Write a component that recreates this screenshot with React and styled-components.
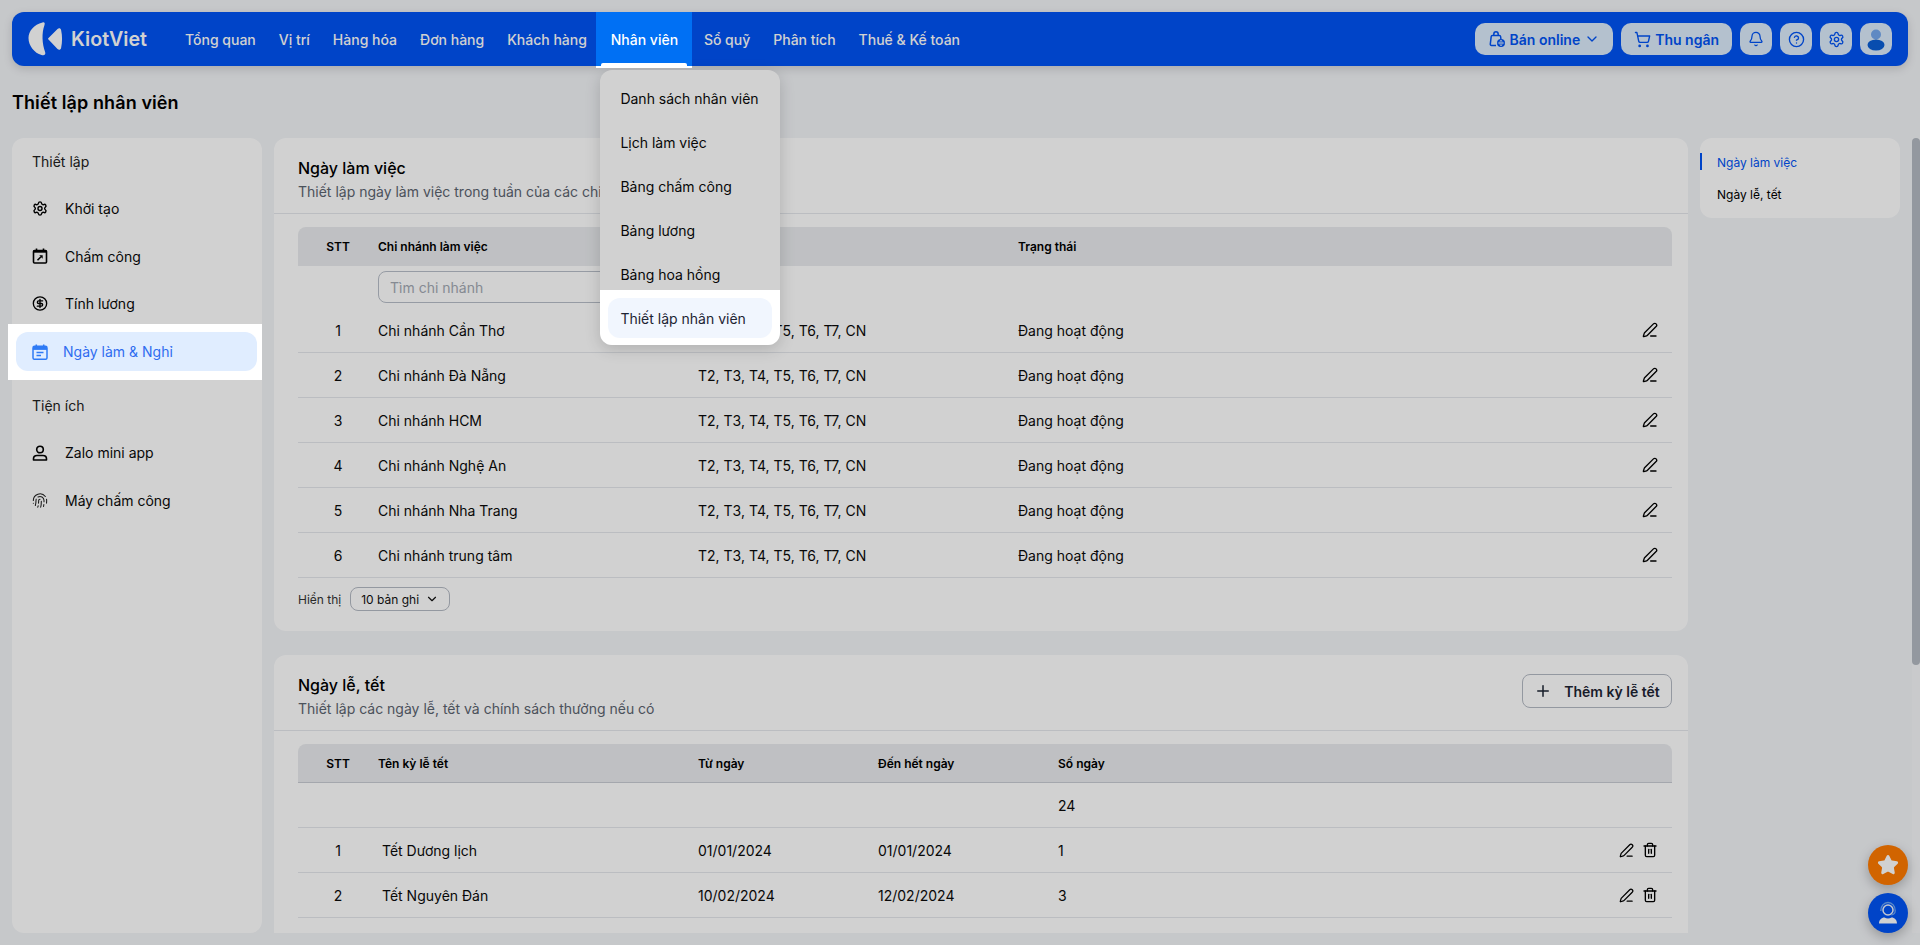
import React from 'react'
import styled, { createGlobalStyle } from 'styled-components'
import {
  Bell, ChevronDown, CircleDollarSign, CircleHelp, Fingerprint, PenLine,
  Plus, Settings, ShoppingCart, Star, Trash2
} from 'lucide-react'

const GlobalStyle = createGlobalStyle`
  html, body {
    margin: 0;
    height: 100%;
    overflow: hidden;
    background: #f2f4f7;
    color: #0a0a0a;
    font-family: Inter, "Noto Sans", sans-serif;
    font-size: 14px;
  }
  * { box-sizing: border-box; }
`;

const Page = styled.div`
  height: 100vh;
  display: flex;
  flex-direction: column;
`;

const Dim = styled.div`
  position: fixed;
  inset: 0;
  z-index: 1000;
  background: rgba(0, 0, 0, 0.18);
`;

const Header = styled.header`
  margin: 12px 12px 0;
  height: 54px;
  flex: none;
  display: flex;
  align-items: center;
  padding: 0 16px;
  border-radius: 12px;
  background: #0053f4;
  box-shadow: 0 3px 10px rgba(0, 0, 0, 0.14);
`;

const LogoWrap = styled.div`
  display: flex;
  align-items: center;
  width: 145.5px;
  flex: none;
  color: #fff;
`;

const LogoText = styled.span`
  margin-left: 8px;
  font-size: 19.7px;
  font-weight: 600;
`;

const Nav = styled.nav`
  display: flex;
  height: 100%;
  flex: 1;
`;

const NavSlot = styled.div`
  position: relative;
  display: flex;
  margin-left: -2px;
`;

const NavLink = styled.a`
  display: flex;
  align-items: center;
  padding: 0 11.500px;
  color: #fff;
  font-weight: 500;
  white-space: nowrap;
`;

const ActiveNavLink = styled(NavLink)`
  position: relative;
  z-index: 1001;
  width: 96px;
  justify-content: center;
  background: #0070f4;
  height: 56px;
  padding: 0 0 2px;
  box-shadow: inset 0 -2px 0 #fff;

  &::after {
    content: "";
    position: absolute;
    left: 5px;
    right: 5px;
    bottom: 2px;
    height: 3px;
    border-radius: 2px 2px 0 0;
    background: #fff;
  }
`;

const Dropdown = styled.div`
  position: absolute;
  top: 58px;
  left: 4px;
  width: 180px;
  padding-top: 6px;
  border-radius: 12px;
  background: #fff;
  box-shadow: 0 4px 16px rgba(0, 0, 0, 0.16);
`;

const DropItem = styled.div`
  height: 44px;
  display: flex;
  align-items: center;
  padding: 0 20px;
  white-space: nowrap;
`;

const DropHighlight = styled.div`
  position: relative;
  z-index: 1001;
  height: 55px;
  margin-top: -6px;
  padding: 8px 8px 7px;
  background: #fff;
  border-radius: 0 0 12px 12px;
`;

const DropActive = styled.div`
  height: 40px;
  display: flex;
  align-items: center;
  padding: 0 12px;
  border-radius: 12px;
  background: #f1f6fe;
  color: #1d2433;
  white-space: nowrap;
`;

const Tools = styled.div`
  display: flex;
  gap: 8px;
`;

const ToolButton = styled.button`
  height: 32px;
  min-width: 32px;
  padding: ${p => (p.$wide ? '0 13px' : '0')};
  display: flex;
  align-items: center;
  justify-content: center;
  gap: 4px;
  border: 0;
  border-radius: 10px;
  background: #dcecfc;
  color: #0053f4;
  font-family: inherit;
  font-size: 14px;
  font-weight: 600;
`;

const PageTitle = styled.h1`
  flex: none;
  height: 72px;
  margin: 0;
  padding-left: 12px;
  display: flex;
  align-items: center;
  font-size: 18px;
  font-weight: 600;
  letter-spacing: 0.1px;
  color: #000;
`;

const Scroller = styled.div`
  flex: 1;
  min-height: 0;
  margin-bottom: 12px;
  padding: 0 20px 0 12px;
  overflow: hidden;
  display: grid;
  grid-template-columns: 250px 1fr 200px;
  gap: 12px;
  align-items: start;
`;

const ScrollTrack = styled.div`
  position: fixed;
  top: 138px;
  right: 0;
  bottom: 12px;
  width: 8px;
  background: #f6f7f9;
`;

const ScrollThumb = styled.div`
  height: 527px;
  border-radius: 4px;
  background: #b4bac2;
`;

const Sidebar = styled.aside`
  height: 795px;
  padding-top: 3px;
  border-radius: 12px;
  background: #fff;
`;

const SideLabel = styled.div`
  height: 40px;
  margin-bottom: 4px;
  display: flex;
  align-items: center;
  padding-left: 20px;
  color: #222;
`;

const SideItem = styled.div`
  height: 47.500px;
  display: flex;
  align-items: center;
  gap: 17px;
  padding-left: 20px;
  white-space: nowrap;
`;

const SideIcon = styled.span`
  width: 16px;
  display: flex;
  justify-content: center;
  flex: none;
`;

const SideHighlight = styled.div`
  position: relative;
  z-index: 1001;
  height: 56px;
  margin: -3.500px 0 5px -4px;
  padding: 8px 5px 9px 8px;
  background: #fff;
`;

const SideActive = styled.div`
  height: 39px;
  display: flex;
  align-items: center;
  gap: 15px;
  padding-left: 16px;
  border-radius: 12px;
  background: #e0edff;
  color: #2f6cf0;
`;

const Column = styled.main`
  display: flex;
  flex-direction: column;
  gap: 24px;
`;

const Card = styled.section`
  border-radius: 12px;
  background: #fff;
  padding-bottom: ${p => p.$bottom}px;
`;

const CardHead = styled.div`
  height: 76px;
  padding: 18px 22px 0 24px;
  display: flex;
  justify-content: space-between;
  border-bottom: 1px solid #e4e7ec;
`;

const CardTitle = styled.div`
  font-size: 16px;
  font-weight: 500;
  line-height: 24px;
  color: #000;
`;

const CardSub = styled.div`
  line-height: 24px;
  color: #5c6470;
`;

const OutlineButton = styled.button`
  width: 150px;
  height: 34px;
  margin-top: 1px;
  margin-right: -6px;
  display: flex;
  align-items: center;
  justify-content: center;
  gap: 12px;
  border: 1px solid #b4bac4;
  border-radius: 8px;
  background: #fff;
  font-family: inherit;
  font-size: 14px;
  font-weight: 600;
  color: #1d2433;
`;

const Table = styled.div`
  margin: 13px 16px 0 24px;
`;

const Row = styled.div`
  display: grid;
  grid-template-columns: ${p => p.$cols};
  align-items: center;
  height: 45px;
  border-bottom: 1px solid #e4e7ec;
`;

const HeadRow = styled(Row)`
  height: 39px;
  border-radius: 8px 8px 0 0;
  background: #e9ebee;
  border-bottom: ${p => (p.$line ? '1px solid #c8ccd4' : '0')};
  font-size: 12px;
  font-weight: 600;
  color: #000;
`;

const FilterRow = styled(Row)`
  height: 42px;
  border-bottom: 0;
`;

const Center = styled.div`
  text-align: center;
`;

const Indented = styled.div`
  padding-left: 4px;
`;

const SearchBox = styled.input`
  width: 300px;
  height: 32px;
  padding: 0 11px;
  border: 1px solid #b8bec8;
  border-radius: 8px;
  background: #fff;
  font-family: inherit;
  font-size: 14px;

  &::placeholder { color: #a3a9b3; }
`;

const Actions = styled.div`
  display: flex;
  justify-content: flex-end;
  align-items: center;
  gap: 8px;
  padding-right: 14px;
`;

const Footer = styled.div`
  display: flex;
  align-items: center;
  gap: 9px;
  margin: 9px 24px 0;
  font-size: 12px;
  color: #333;
`;

const PageSize = styled.div`
  width: 100px;
  height: 24px;
  display: flex;
  align-items: center;
  justify-content: space-between;
  padding: 0 10px;
  border: 1px solid #b4bac4;
  border-radius: 8px;
  color: #111;
`;

const Outline = styled.aside`
  height: 80px;
  padding-top: 8px;
  border-radius: 12px;
  background: #fff;
  font-size: 12px;
`;

const OutlineItem = styled.div`
  position: relative;
  height: 32px;
  display: flex;
  align-items: center;
  padding-left: 17px;
  color: ${p => (p.$active ? '#0053f4' : '#000')};

  &::before {
    content: "";
    display: ${p => (p.$active ? 'block' : 'none')};
    position: absolute;
    left: 0;
    top: 7px;
    width: 2px;
    height: 17px;
    background: #0053f4;
  }
`;

const Floating = styled.div`
  position: fixed;
  right: 12px;
  bottom: 12px;
  display: flex;
  flex-direction: column;
  gap: 8px;
`;

const Fab = styled.div`
  width: 40px;
  height: 40px;
  display: flex;
  align-items: center;
  justify-content: center;
  border-radius: 50%;
  background: ${p => p.$bg};
  box-shadow: 0 4px 12px rgba(0, 0, 0, 0.25);
`;

const Logo = () => (
  <svg width="35" height="34" viewBox="0 0 35 34" fill="currentColor">
    <path d="M14.500 0.500C6 2.500 0.500 9 0.500 16c0 8 6 15 13 17 3 0.800 4.500-0.500 3.600-3-3-8-3.600-19-0.600-27 0.800-2.200-0.300-3-2-2.500z" />
    <path d="M20.500 16l9-9c1.500-1.400 3.200-0.800 3.600 1 1.300 6 1.300 12 0 18-0.400 1.800-2.100 2.400-3.600 1l-9-9.500c-0.600-0.500-0.600-1 0-1.500z" />
  </svg>
);

const BagGlobe = () => (
  <svg width="18" height="18" viewBox="0 0 18 18" fill="none" stroke="currentColor" strokeWidth="1.500">
    <path d="M8 15.500H3.500c-.8 0-1.300-.6-1.200-1.400L3.200 6.500c.1-.6.500-1 1.100-1h7.200c.6 0 1 .4 1.100 1l.3 2.500" strokeLinejoin="round" />
    <path d="M5.800 5.500V4.200C5.800 2.700 6.700 1.700 8 1.700s2.200 1 2.200 2.500v1.300" />
    <circle cx="13" cy="13" r="4" fill="currentColor" stroke="none" />
    <path d="M9.800 13h6.400M13 10c-1.500 2-1.500 4 0 6M13 10c1.500 2 1.500 4 0 6" stroke="#dcecfc" strokeWidth="0.800" />
  </svg>
);

const Avatar = () => (
  <svg width="24" height="24" viewBox="0 0 24 24">
    <circle cx="12" cy="7.500" r="5" fill="#74a8ee" />
    <ellipse cx="12" cy="18" rx="8.500" ry="5.500" fill="#0a5fd6" />
  </svg>
);

const CalendarEdit = () => (
  <svg width="16" height="16" viewBox="0 0 16 16" fill="none" stroke="#000" strokeWidth="1.600">
    <rect x="1.500" y="2.500" width="13" height="12.500" rx="1" />
    <path d="M1.500 3.500h13" strokeWidth="2.400" />
    <path d="M4.500 0.500v3M11.500 0.500v3" />
    <path d="M5.500 12.300l3.500-3.500" />
    <path d="M7.300 7.300h3.400v3.400z" fill="#000" stroke="none" />
  </svg>
);

const CalendarDoc = () => (
  <svg width="16" height="16" viewBox="0 0 16 16" fill="none">
    <rect x="1" y="2.300" width="14" height="13" rx="1.600" stroke="#2f7bf5" strokeWidth="1.500" />
    <rect x="1" y="2.300" width="14" height="3.600" fill="#2f7bf5" />
    <path d="M4.300 0.500v3M11.700 0.500v3" stroke="#2f7bf5" strokeWidth="1.500" />
    <path d="M4.500 8.500h7M4.500 11.500h4.500" stroke="#2f7bf5" strokeWidth="1.400" />
  </svg>
);

const Person = () => (
  <svg width="16" height="16" viewBox="0 0 16 16" fill="none" stroke="#000" strokeWidth="1.600">
    <circle cx="8" cy="4.500" r="3.300" />
    <path d="M1.500 15v-1.200c0-2 1.500-3.300 3.500-3.300h6c2 0 3.500 1.300 3.500 3.300V15z" strokeLinejoin="round" />
  </svg>
);

const Headset = () => (
  <svg width="22" height="24" viewBox="0 0 22 24" fill="none">
    <circle cx="11" cy="9" r="5" stroke="#eef4ff" strokeWidth="1.500" />
    <path d="M3.800 10C3.600 5 7 1.500 11 1.500s7.400 3.500 7.200 8.500" stroke="#6fa8f5" strokeWidth="1.400" />
    <path d="M18.200 10c0 2-1.500 3.500-4 4" stroke="#6fa8f5" strokeWidth="1.200" />
    <path d="M2 22.500c0-3.500 2.500-6 5.500-6 2 1.300 5 1.300 7 0 3 0 5.500 2.500 5.500 6z" fill="#fff" />
  </svg>
);

const navBefore = ['Tổng quan', 'Vị trí', 'Hàng hóa', 'Đơn hàng', 'Khách hàng'];
const navAfter = ['Sổ quỹ', 'Phân tích', 'Thuế & Kế toán'];
const menu = ['Danh sách nhân viên', 'Lịch làm việc', 'Bảng chấm công', 'Bảng lương', 'Bảng hoa hồng'];
const branches = ['Chi nhánh Cần Thơ', 'Chi nhánh Đà Nẵng', 'Chi nhánh HCM', 'Chi nhánh Nghệ An', 'Chi nhánh Nha Trang', 'Chi nhánh trung tâm'];
const holidays = [
  ['Tết Dương lịch', '01/01/2024', '01/01/2024', '1'],
  ['Tết Nguyên Đán', '10/02/2024', '12/02/2024', '3']
];

const branchCols = '80px 320px 320px 1fr 40px';
const holidayCols = '80px 320px 180px 180px 1fr 80px';

export default function App() {
  return (
    <Page>
      <GlobalStyle />
      <Header>
        <LogoWrap>
          <Logo />
          <LogoText>KiotViet</LogoText>
        </LogoWrap>
        <Nav>
          {navBefore.map(n => <NavLink key={n}>{n}</NavLink>)}
          <NavSlot>
            <ActiveNavLink>Nhân viên</ActiveNavLink>
            <Dropdown>
              {menu.map(m => <DropItem key={m}>{m}</DropItem>)}
              <DropHighlight>
                <DropActive>Thiết lập nhân viên</DropActive>
              </DropHighlight>
            </Dropdown>
          </NavSlot>
          {navAfter.map(n => <NavLink key={n}>{n}</NavLink>)}
        </Nav>
        <Tools>
          <ToolButton $wide><BagGlobe />Bán online<ChevronDown size={16} strokeWidth={2} /></ToolButton>
          <ToolButton $wide><ShoppingCart size={17} strokeWidth={1.9} />Thu ngân</ToolButton>
          <ToolButton><Bell size={16} strokeWidth={1.9} /></ToolButton>
          <ToolButton><CircleHelp size={17} strokeWidth={1.9} /></ToolButton>
          <ToolButton><Settings size={17} strokeWidth={1.9} /></ToolButton>
          <ToolButton><Avatar /></ToolButton>
        </Tools>
      </Header>

      <PageTitle>Thiết lập nhân viên</PageTitle>

      <Scroller>
        <Sidebar>
          <SideLabel>Thiết lập</SideLabel>
          <SideItem><SideIcon><Settings size={17} color="#000" strokeWidth={2.1} /></SideIcon>Khởi tạo</SideItem>
          <SideItem><SideIcon><CalendarEdit /></SideIcon>Chấm công</SideItem>
          <SideItem><SideIcon><CircleDollarSign size={17} color="#000" strokeWidth={2} /></SideIcon>Tính lương</SideItem>
          <SideHighlight>
            <SideActive><CalendarDoc />Ngày làm & Nghỉ</SideActive>
          </SideHighlight>
          <SideLabel>Tiện ích</SideLabel>
          <SideItem><SideIcon><Person /></SideIcon>Zalo mini app</SideItem>
          <SideItem><SideIcon><Fingerprint size={17} color="#222" strokeWidth={1.6} /></SideIcon>Máy chấm công</SideItem>
        </Sidebar>

        <Column>
          <Card $bottom={20}>
            <CardHead>
              <div>
                <CardTitle>Ngày làm việc</CardTitle>
                <CardSub>Thiết lập ngày làm việc trong tuần của các chi nhánh</CardSub>
              </div>
            </CardHead>
            <Table>
              <HeadRow $cols={branchCols}>
                <Center>STT</Center>
                <div>Chi nhánh làm việc</div>
                <div>Ngày làm việc</div>
                <div>Trạng thái</div>
                <div />
              </HeadRow>
              <FilterRow $cols={branchCols}>
                <div />
                <SearchBox placeholder="Tìm chi nhánh" />
              </FilterRow>
              {branches.map((b, i) => (
                <Row key={b} $cols={branchCols}>
                  <Center>{i + 1}</Center>
                  <div>{b}</div>
                  <div>T2, T3, T4, T5, T6, T7, CN</div>
                  <div>Đang hoạt động</div>
                  <Actions><PenLine size={16} color="#000" strokeWidth={2} /></Actions>
                </Row>
              ))}
            </Table>
            <Footer>
              Hiển thị
              <PageSize>10 bản ghi<ChevronDown size={14} /></PageSize>
            </Footer>
          </Card>

          <Card $bottom={140}>
            <CardHead>
              <div>
                <CardTitle>Ngày lễ, tết</CardTitle>
                <CardSub>Thiết lập các ngày lễ, tết và chính sách thưởng nếu có</CardSub>
              </div>
              <OutlineButton><Plus size={18} strokeWidth={2} />Thêm kỳ lễ tết</OutlineButton>
            </CardHead>
            <Table>
              <HeadRow $cols={holidayCols} $line>
                <Center>STT</Center>
                <div>Tên kỳ lễ tết</div>
                <div>Từ ngày</div>
                <div>Đến hết ngày</div>
                <div>Số ngày</div>
                <div />
              </HeadRow>
              <Row $cols={holidayCols}>
                <div /><div /><div /><div />
                <div>24</div>
                <div />
              </Row>
              {holidays.map((h, i) => (
                <Row key={h[0]} $cols={holidayCols}>
                  <Center>{i + 1}</Center>
                  <Indented>{h[0]}</Indented>
                  <div>{h[1]}</div>
                  <div>{h[2]}</div>
                  <div>{h[3]}</div>
                  <Actions>
                    <PenLine size={15} color="#000" strokeWidth={2} />
                    <Trash2 size={16} color="#000" strokeWidth={2} />
                  </Actions>
                </Row>
              ))}
            </Table>
          </Card>
        </Column>

        <Outline>
          <OutlineItem $active>Ngày làm việc</OutlineItem>
          <OutlineItem>Ngày lễ, tết</OutlineItem>
        </Outline>
      </Scroller>

      <ScrollTrack>
        <ScrollThumb />
      </ScrollTrack>

      <Floating>
        <Fab $bg="#ff7a00"><Star size={22} color="#fff" fill="#fff" /></Fab>
        <Fab $bg="#0053f4"><Headset /></Fab>
      </Floating>

      <Dim />
    </Page>
  )
}
